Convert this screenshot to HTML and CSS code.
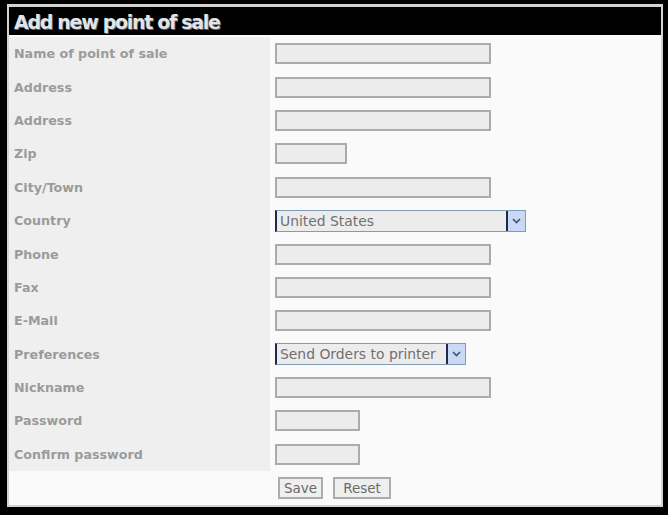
FILE: index.html
```html
<!DOCTYPE html>
<html>
<head>
<meta charset="utf-8">
<link rel="stylesheet" href="styles.css">
</head>
<body>
<div class="panel">
  <div class="title">Add new point of sale</div>
  <form class="form">
    <div class="label">Name of point of sale</div><div class="field"><input class="inp wide" type="text"></div>
    <div class="label">Address</div><div class="field"><input class="inp wide" type="text"></div>
    <div class="label">Address</div><div class="field"><input class="inp wide" type="text"></div>
    <div class="label">Zip</div><div class="field"><input class="inp zip" type="text"></div>
    <div class="label">City/Town</div><div class="field"><input class="inp wide" type="text"></div>
    <div class="label">Country</div><div class="field"><div class="select country"><span class="sel-text">United States</span><span class="sel-btn"><svg width="9" height="6" viewBox="0 0 9 6"><path d="M1 1 L4.5 4.5 L8 1" fill="none" stroke="#3f5275" stroke-width="1.6"/></svg></span></div></div>
    <div class="label">Phone</div><div class="field"><input class="inp wide" type="text"></div>
    <div class="label">Fax</div><div class="field"><input class="inp wide" type="text"></div>
    <div class="label">E-Mail</div><div class="field"><input class="inp wide" type="text"></div>
    <div class="label">Preferences</div><div class="field"><div class="select prefs"><span class="sel-text">Send Orders to printer</span><span class="sel-btn"><svg width="9" height="6" viewBox="0 0 9 6"><path d="M1 1 L4.5 4.5 L8 1" fill="none" stroke="#3f5275" stroke-width="1.6"/></svg></span></div></div>
    <div class="label">Nickname</div><div class="field"><input class="inp wide" type="text"></div>
    <div class="label">Password</div><div class="field"><input class="inp pass" type="password"></div>
    <div class="label">Confirm password</div><div class="field"><input class="inp pass" type="password"></div>
    <div class="spacer"></div><div class="buttons"><button type="button" class="btn save">Save</button><button type="button" class="btn reset">Reset</button></div>
  </form>
</div>
</body>
</html>
```
FILE: styles.css
```css
html, body {
  margin: 0;
  padding: 0;
  background: #000;
}
body {
  padding: 4px 0 0 7px;
  font-family: "DejaVu Sans", Verdana, sans-serif;
}
.panel {
  width: 652px;
  border: 2px solid #d2d2d2;
  border-top-width: 3px;
  background: #fafafa;
}
.title {
  background: #000;
  height: 28px;
  box-sizing: border-box;
  padding: 4px 0 0 5px;
  color: #e4e4e4;
  font-weight: bold;
  font-size: 19px;
  letter-spacing: -1.3px;
  line-height: 23px;
  text-shadow: 1px 1px 0 #5d6584;
}
.form {
  display: grid;
  grid-template-columns: 261px 1fr;
  grid-template-rows: repeat(13, 33.4px) 34px;
  padding-top: 2px;
  margin: 0;
}
.label {
  background: #efefef;
  color: #9b9b9b;
  font-weight: bold;
  font-size: 12.7px;
  padding-left: 5px;
  display: flex;
  align-items: center;
}
.spacer {
  background: #fafafa;
}
.field {
  display: flex;
  align-items: center;
  padding-left: 5px;
}
.inp {
  box-sizing: border-box;
  height: 21px;
  border: 2px solid #ababab;
  background: #ececec;
  margin: 0;
  padding: 0 3px;
  outline: none;
}
.wide { width: 216px; }
.zip { width: 72px; }
.pass { width: 85px; }
.select {
  box-sizing: border-box;
  height: 22px;
  display: flex;
  align-items: stretch;
  border: 1px solid #7f9db9;
  border-left: 2px solid #1d2a4a;
  background: #ececec;
  color: #707070;
  font-size: 13.9px;
}
.country { width: 251px; }
.prefs { width: 191px; }
.sel-text {
  flex: 1;
  padding-left: 3px;
  line-height: 20px;
  white-space: nowrap;
}
.sel-btn {
  width: 17px;
  border-left: 2px solid #1d2a4a;
  background: #c9d8f5;
  display: flex;
  align-items: center;
  justify-content: center;
}
.buttons {
  display: flex;
  align-items: center;
  gap: 10px;
  padding-left: 8px;
}
.btn {
  box-sizing: border-box;
  height: 22px;
  border: 2px solid #acacac;
  background: #efefef;
  color: #6a6a6a;
  font-family: "DejaVu Sans", Verdana, sans-serif;
  font-size: 13.5px;
  padding: 0;
  margin: 0;
  text-align: center;
}
.save { width: 45px; }
.reset { width: 58px; }
```
